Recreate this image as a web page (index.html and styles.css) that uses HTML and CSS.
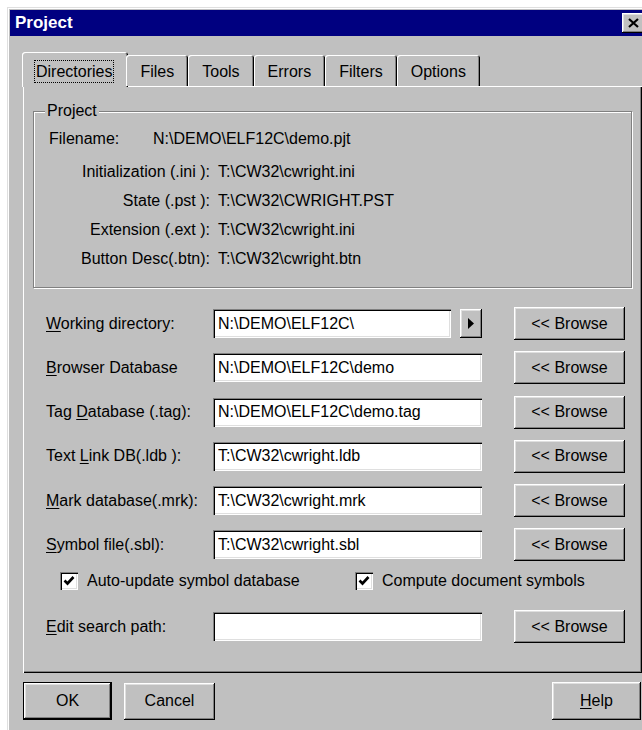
FILE: index.html
```html
<!DOCTYPE html>
<html lang="en">
<head>
<meta charset="utf-8">
<title>Project</title>
<link rel="stylesheet" href="styles.css">
</head>
<body>
<div class="window">
  <div class="titlebar">
    <span class="title">Project</span>
    <button class="close" type="button" aria-label="Close">
      <svg width="11" height="10" viewBox="0 0 11 10"><path d="M1 1 L10 9 M10 1 L1 9" stroke="#000" stroke-width="2.2" fill="none"/></svg>
    </button>
  </div>

  <div class="dialog">
    <div class="tabs">
      <div class="tab active"><span class="focus">Directories</span></div>
      <div class="tab">Files</div>
      <div class="tab">Tools</div>
      <div class="tab">Errors</div>
      <div class="tab">Filters</div>
      <div class="tab">Options</div>
    </div>

    <div class="panel">
      <fieldset class="group">
        <legend>Project</legend>
        <div class="fileline">
          <span>Filename:</span>
          <span>N:\DEMO\ELF12C\demo.pjt</span>
        </div>
        <div class="info">
          <span class="k">Initialization (.ini ):</span><span>T:\CW32\cwright.ini</span>
          <span class="k">State (.pst ):</span><span>T:\CW32\CWRIGHT.PST</span>
          <span class="k">Extension (.ext ):</span><span>T:\CW32\cwright.ini</span>
          <span class="k">Button Desc(.btn):</span><span>T:\CW32\cwright.btn</span>
        </div>
      </fieldset>

      <div class="form">
        <label class="lbl"><u>W</u>orking directory:</label>
        <input class="field" type="text" value="N:\DEMO\ELF12C\" readonly>
        <button class="btn arrow" type="button" aria-label="Expand">
          <svg width="6" height="11" viewBox="0 0 6 11"><path d="M0 0 L6 5.5 L0 11 Z" fill="#000"/></svg>
        </button>
        <button class="btn browse" type="button">&lt;&lt; Browse</button>

        <label class="lbl"><u>B</u>rowser Database</label>
        <input class="field wide" type="text" value="N:\DEMO\ELF12C\demo" readonly>
        <button class="btn browse" type="button">&lt;&lt; Browse</button>

        <label class="lbl">Tag <u>D</u>atabase (.tag):</label>
        <input class="field wide" type="text" value="N:\DEMO\ELF12C\demo.tag" readonly>
        <button class="btn browse" type="button">&lt;&lt; Browse</button>

        <label class="lbl">Text <u>L</u>ink DB(.ldb ):</label>
        <input class="field wide" type="text" value="T:\CW32\cwright.ldb" readonly>
        <button class="btn browse" type="button">&lt;&lt; Browse</button>

        <label class="lbl"><u>M</u>ark database(.mrk):</label>
        <input class="field wide" type="text" value="T:\CW32\cwright.mrk" readonly>
        <button class="btn browse" type="button">&lt;&lt; Browse</button>

        <label class="lbl"><u>S</u>ymbol file(.sbl):</label>
        <input class="field wide" type="text" value="T:\CW32\cwright.sbl" readonly>
        <button class="btn browse" type="button">&lt;&lt; Browse</button>
      </div>

      <div class="checks">
        <label class="check">
          <span class="box"><svg width="12" height="12" viewBox="0 0 12 12"><path d="M1.5 5.5 L4.5 8.5 L10.5 2" stroke="#000" stroke-width="2.6" fill="none"/></svg></span>
          Auto-update symbol database
        </label>
        <label class="check">
          <span class="box"><svg width="12" height="12" viewBox="0 0 12 12"><path d="M1.5 5.5 L4.5 8.5 L10.5 2" stroke="#000" stroke-width="2.6" fill="none"/></svg></span>
          Compute document symbols
        </label>
      </div>

      <div class="form edit">
        <label class="lbl"><u>E</u>dit search path:</label>
        <input class="field wide" type="text" value="" readonly>
        <button class="btn browse" type="button">&lt;&lt; Browse</button>
      </div>
    </div>

    <div class="actions">
      <button class="btn push default" type="button">OK</button>
      <button class="btn push cancel" type="button">Cancel</button>
      <button class="btn push help" type="button"><u>H</u>elp</button>
    </div>
  </div>
</div>
</body>
</html>
```

FILE: styles.css
```css
* {
  box-sizing: border-box;
}

body {
  margin: 0;
  background: #fff;
  overflow: hidden;
  font-family: "Liberation Sans", Arial, sans-serif;
  font-size: 16px;
  color: #000;
}

u {
  text-decoration: underline;
  text-underline-offset: 2px;
}

/* window frame */
.window {
  margin: 7px 0 0 7px;
  width: 639px;
  height: 740px;
  background: #c0c0c0;
  border-top: 1px solid #dfdfdf;
  border-left: 1px solid #dfdfdf;
  box-shadow: inset 1px 1px #fff;
  padding: 2px 0 0 2px;
}

.titlebar {
  height: 26px;
  background: #000080;
  display: flex;
  align-items: center;
  justify-content: space-between;
  padding-left: 5px;
}

.title {
  color: #fff;
  font-weight: bold;
  font-size: 17px;
}

.close {
  width: 22px;
  height: 20px;
  margin-right: 2px;
  padding: 0;
  border: none;
  background: #c0c0c0;
  display: flex;
  align-items: center;
  justify-content: center;
  box-shadow: inset -1px -1px #000, inset 1px 1px #fff, inset -2px -2px #808080, inset 2px 2px #dfdfdf;
}

/* tab strip */
.tabs {
  display: flex;
  align-items: flex-end;
  margin: 16px 0 0 14px;
  height: 34px;
  position: relative;
  z-index: 1;
}

.tab {
  height: 31px;
  padding: 2px 14px 0;
  display: flex;
  align-items: center;
  background: #c0c0c0;
  border-radius: 3px 3px 0 0;
  box-shadow: inset 1px 1px #fff, inset -1px 0 #000, inset -2px 0 #808080;
}

.tab.active {
  height: 35px;
  margin: 0 -2px -1px -2px;
  padding: 4px 14px 0 12px;
}

.focus {
  border: 1px dotted #000;
  padding: 0 1px;
  line-height: 21px;
}

/* tab page */
.panel {
  margin: 0 4px 0 13px;
  padding: 16px 10px 30px 10px;
  background: #c0c0c0;
  box-shadow: inset 1px 1px #fff, inset -1px -1px #000, inset -2px -2px #808080;
}

.group {
  margin: 0;
  padding: 0 0 14px 0;
  border: 1px solid #808080;
  box-shadow: inset 1px 1px #fff, 1px 1px #fff;
}

.group legend {
  margin-left: 11px;
  padding: 0 2px;
  line-height: 18px;
  background: #c0c0c0;
}

.fileline {
  display: grid;
  grid-template-columns: 104px auto;
  margin: 9px 0 0 15px;
  line-height: 20px;
}

.info {
  display: grid;
  grid-template-columns: 176px auto;
  column-gap: 8px;
  grid-auto-rows: 29px;
  align-items: center;
  margin-top: 8px;
}

.info .k {
  text-align: right;
}

/* labelled path rows */
.form {
  display: grid;
  grid-template-columns: 167px 238px 31px 143px;
  grid-auto-rows: 33px;
  row-gap: 11.3px;
  align-items: center;
  margin: 19px 0 0 13px;
}

.form.edit {
  margin-top: 20px;
}

.lbl {
  white-space: nowrap;
}

.field {
  height: 29px;
  width: 100%;
  border: none;
  outline: none;
  background: #fff;
  padding: 0 0 0 5px;
  font: inherit;
  color: #000;
  box-shadow: inset 1px 1px #808080, inset 2px 2px #000, inset -1px -1px #fff, inset -2px -2px #dfdfdf;
}

.field.wide {
  grid-column: 2 / 4;
}

.btn {
  border: none;
  background: #c0c0c0;
  font: inherit;
  color: #000;
  padding: 0;
  box-shadow: inset -1px -1px #000, inset 1px 1px #fff, inset -2px -2px #808080, inset 2px 2px #dfdfdf;
}

.arrow {
  width: 22px;
  height: 29px;
  justify-self: end;
  display: flex;
  align-items: center;
  justify-content: center;
}

.browse {
  grid-column: 4;
  justify-self: end;
  width: 111px;
  height: 33px;
}

/* check boxes */
.checks {
  display: grid;
  grid-template-columns: 295px auto;
  margin: 10px 0 0 27px;
  height: 19px;
}

.check {
  display: flex;
  align-items: center;
  gap: 9px;
  white-space: nowrap;
}

.box {
  width: 18px;
  height: 18px;
  background: #fff;
  display: flex;
  align-items: center;
  justify-content: center;
  box-shadow: inset 1px 1px #808080, inset 2px 2px #000, inset -1px -1px #fff, inset -2px -2px #dfdfdf;
}

/* dialog buttons */
.actions {
  display: flex;
  align-items: center;
  margin-top: 9px;
  padding-left: 13px;
}

.push {
  height: 37px;
  width: 90px;
}

.default {
  width: 89px;
  height: 38px;
  border: 1px solid #000;
}

.cancel {
  margin-left: 12px;
  width: 91px;
}

.help {
  margin-left: auto;
  margin-right: 5px;
  width: 89px;
  height: 38px;
}
```
